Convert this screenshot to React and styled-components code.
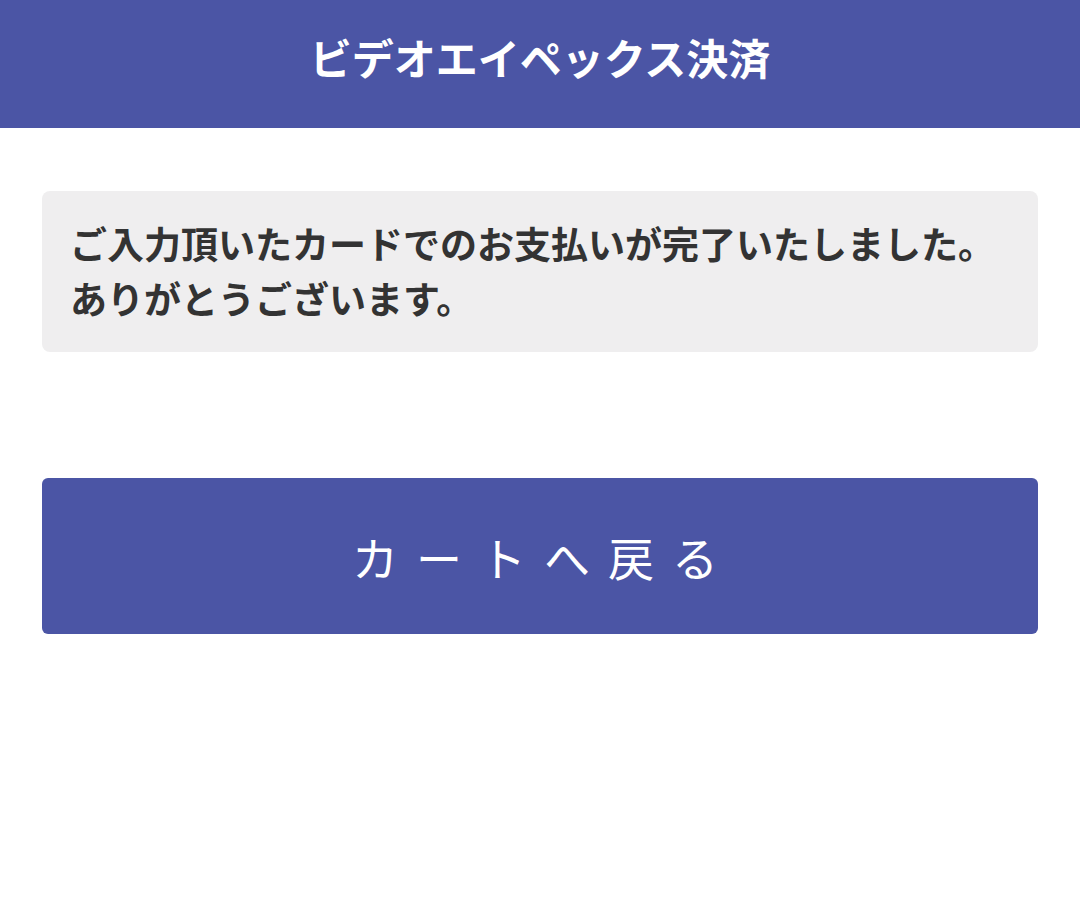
import React from "react";
import styled, { createGlobalStyle } from "styled-components";

const Global = createGlobalStyle`
  html, body { margin: 0; padding: 0; background: #ffffff; }
  body { font-family: "Noto Sans CJK JP", "Noto Sans", sans-serif; }
`;

const Header = styled.header`
  height: 128px;
  background: #4b55a5;
  display: flex;
  align-items: center;
  justify-content: center;
  padding-bottom: 14px;
  box-sizing: border-box;
`;

const Title = styled.h1`
  margin: 0;
  color: #ffffff;
  font-size: 42px;
  font-weight: 700;
  line-height: 1;
`;

const Main = styled.main`
  padding: 63px 42px 0;
  display: flex;
  flex-direction: column;
  gap: 126px;
`;

const Message = styled.div`
  background: #efeeef;
  border-radius: 8px;
  padding: 25px 28px 26px;
  color: #333333;
  font-size: 37px;
  font-weight: 700;
  line-height: 55px;
`;

const Button = styled.button`
  height: 156px;
  border: none;
  border-radius: 6px;
  background: #4b55a5;
  color: #ffffff;
  font-family: "Noto Sans CJK JP", "Noto Sans", sans-serif;
  font-size: 46px;
  font-weight: 400;
  letter-spacing: 18px;
  padding: 0 0 0 8px;
  cursor: pointer;
`;

export default function App() {
  return (
    <>
      <Global />
      <Header>
        <Title>ビデオエイペックス決済</Title>
      </Header>
      <Main>
        <Message>
          ご入力頂いたカードでのお支払いが完了いたしました。
          <br />
          ありがとうございます。
        </Message>
        <Button>カートへ戻る</Button>
      </Main>
    </>
  );
}
